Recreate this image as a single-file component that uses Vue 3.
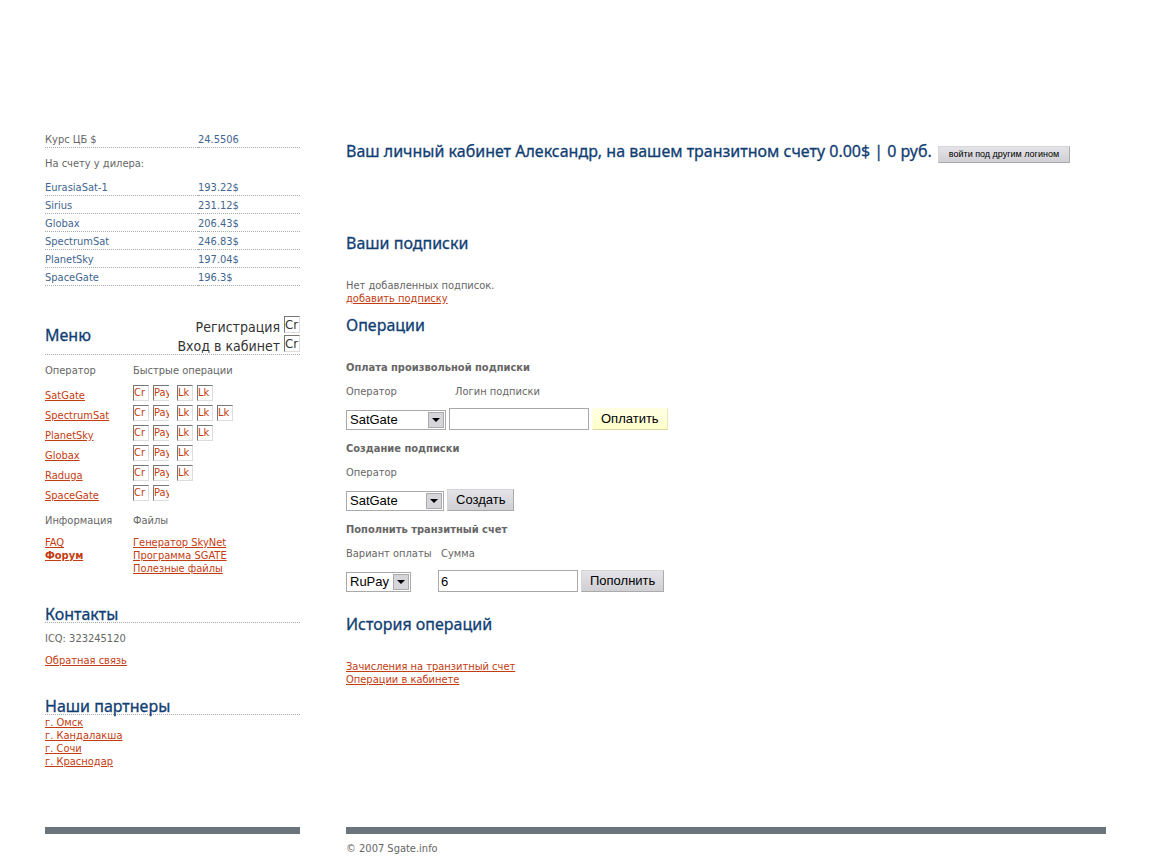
<script setup>
import { ref } from 'vue'

const balances = [
  ['EurasiaSat-1', '193.22$'],
  ['Sirius', '231.12$'],
  ['Globax', '206.43$'],
  ['SpectrumSat', '246.83$'],
  ['PlanetSky', '197.04$'],
  ['SpaceGate', '196.3$'],
]

const operators = [
  { name: 'SatGate', quick: ['Lk', 'Lk'] },
  { name: 'SpectrumSat', quick: ['Lk', 'Lk', 'Lk'] },
  { name: 'PlanetSky', quick: ['Lk', 'Lk'] },
  { name: 'Globax', quick: ['Lk'] },
  { name: 'Raduga', quick: ['Lk'] },
  { name: 'SpaceGate', quick: [] },
]

const partners = ['г. Омск', 'г. Кандалакша', 'г. Сочи', 'г. Краснодар']

const payOperator = ref('SatGate')
const createOperator = ref('SatGate')
const login = ref('')
const method = ref('RuPay')
const amount = ref('6')
</script>

<template>
  <div class="page">
    <div class="columns">
      <aside class="side">
        <table class="rates">
          <tbody>
            <tr class="rate">
              <td class="plain">Курс ЦБ $</td>
              <td>24.5506</td>
            </tr>
            <tr>
              <td class="caption" colspan="2">На счету у дилера:</td>
            </tr>
            <tr v-for="b in balances" :key="b[0]" class="rate">
              <td>{{ b[0] }}</td>
              <td>{{ b[1] }}</td>
            </tr>
          </tbody>
        </table>

        <section class="menu">
          <header class="menu-head">
            <h2>Меню</h2>
            <div class="account">
              <a href="#">Регистрация <span class="pic">Cr</span></a>
              <a href="#">Вход в кабинет <span class="pic">Cr</span></a>
            </div>
          </header>
          <div class="pair labels">
            <span>Оператор</span>
            <span>Быстрые операции</span>
          </div>
          <div v-for="o in operators" :key="o.name" class="pair operator">
            <div><a href="#">{{ o.name }}</a></div>
            <div class="quick">
              <a href="#" class="pic">Cr</a>
              <a href="#" class="pic pay">Pay</a>
              <a v-for="(q, i) in o.quick" :key="i" href="#" class="pic">{{ q }}</a>
            </div>
          </div>
          <div class="pair labels">
            <span>Информация</span>
            <span>Файлы</span>
          </div>
          <div class="pair">
            <div class="links">
              <a href="#">FAQ</a>
              <a href="#"><b>Форум</b></a>
            </div>
            <div class="links">
              <a href="#">Генератор SkyNet</a>
              <a href="#">Программа SGATE</a>
              <a href="#">Полезные файлы</a>
            </div>
          </div>
        </section>

        <section class="block">
          <h2 class="ruled">Контакты</h2>
          <p class="icq">ICQ: 323245120</p>
          <a href="#">Обратная связь</a>
        </section>

        <section class="block">
          <h2 class="ruled">Наши партнеры</h2>
          <div class="links">
            <a v-for="p in partners" :key="p" href="#">{{ p }}</a>
          </div>
        </section>
      </aside>

      <main class="main">
        <div class="welcome">
          <h1>Ваш личный кабинет Александр, на вашем транзитном счету 0.00$ | 0 руб.</h1>
          <button type="button" class="btn small">войти под другим логином</button>
        </div>

        <section class="subs">
          <h2>Ваши подписки</h2>
          <p>Нет добавленных подписок.</p>
          <a href="#">добавить подписку</a>
        </section>

        <section class="ops">
          <h2>Операции</h2>

          <form @submit.prevent>
            <h3>Оплата произвольной подписки</h3>
            <div class="fields pay-fields">
              <label for="pay-operator">Оператор</label>
              <label for="pay-login" class="indent">Логин подписки</label>
              <span class="row-end"></span>
              <span class="select">
                <select id="pay-operator" v-model="payOperator">
                  <option v-for="o in operators" :key="o.name">{{ o.name }}</option>
                </select>
                <span class="arrow"><svg width="8" height="4" viewBox="0 0 8 4"><path d="M0 0h8L4 4z" /></svg></span>
              </span>
              <input id="pay-login" v-model="login" type="text">
              <button type="submit" class="btn accent">Оплатить</button>
            </div>
          </form>

          <form @submit.prevent>
            <h3>Создание подписки</h3>
            <div class="fields create-fields">
              <label for="create-operator">Оператор</label>
              <span class="row-end"></span>
              <span class="select">
                <select id="create-operator" v-model="createOperator">
                  <option v-for="o in operators" :key="o.name">{{ o.name }}</option>
                </select>
                <span class="arrow"><svg width="8" height="4" viewBox="0 0 8 4"><path d="M0 0h8L4 4z" /></svg></span>
              </span>
              <button type="submit" class="btn">Создать</button>
            </div>
          </form>

          <form @submit.prevent>
            <h3>Пополнить транзитный счет</h3>
            <div class="fields fund-fields">
              <label for="fund-method">Вариант оплаты</label>
              <label for="fund-amount" class="indent">Сумма</label>
              <span class="row-end"></span>
              <span class="select short">
                <select id="fund-method" v-model="method">
                  <option>RuPay</option>
                </select>
                <span class="arrow"><svg width="8" height="4" viewBox="0 0 8 4"><path d="M0 0h8L4 4z" /></svg></span>
              </span>
              <input id="fund-amount" v-model="amount" type="text">
              <button type="submit" class="btn">Пополнить</button>
            </div>
          </form>
        </section>

        <section class="history">
          <h2>История операций</h2>
          <div class="links">
            <a href="#">Зачисления на транзитный счет</a>
            <a href="#">Операции в кабинете</a>
          </div>
        </section>
      </main>
    </div>

    <footer class="columns foot">
      <div class="bar"></div>
      <div class="bar"></div>
      <p class="copy">© 2007 Sgate.info</p>
    </footer>
  </div>
</template>

<style>
body {
  margin: 0;
  background: #fff;
}
</style>

<style scoped>
.page {
  padding: 130px 46px 0 45px;
  font: 11px/13px "DejaVu Sans Condensed", "DejaVu Sans", sans-serif;
  color: #666;
}
.columns {
  display: grid;
  grid-template-columns: 255px minmax(0, 1fr);
  column-gap: 46px;
}
h1, h2, h3, p {
  margin: 0;
}
h1, h2 {
  font-family: "Noto Sans", sans-serif;
  font-size: 16px;
  line-height: 20px;
  font-weight: 400;
  color: #113e73;
  -webkit-text-stroke: 0.3px #113e73;
}
h3 {
  height: 14px;
  font-size: 11px;
  line-height: 16px;
  font-weight: 700;
}
a {
  color: #c43c11;
}
.rates {
  width: 100%;
  border-collapse: collapse;
  color: #426690;
}
.rates td {
  padding: 2px 0 0;
  width: 40%;
}
.rates td:first-child {
  width: 60%;
}
.rate td {
  height: 15px;
  border-bottom: 1px dotted #aaa;
}
.rates .plain, .rates .caption {
  color: #666;
}
.rates .caption {
  padding: 0;
  height: 30px;
}
.menu {
  margin-top: 30px;
}
.menu-head {
  display: flex;
  justify-content: space-between;
  align-items: center;
  border-bottom: 1px dotted #aaa;
}
.account {
  display: flex;
  flex-direction: column;
  align-items: flex-end;
  font-size: 14px;
  line-height: 22px;
}
.account a {
  display: flex;
  gap: 4px;
  align-items: flex-start;
  height: 19px;
  color: #333;
  text-decoration: none;
}
.account a .pic {
  height: 17px;
  font-size: 13px;
  line-height: 16px;
}
.pic {
  box-sizing: border-box;
  width: 16px;
  height: 16px;
  overflow: hidden;
  border: 1px solid;
  border-color: #777 #ddd #ddd #777;
  line-height: 14px;
  text-decoration: none;
}
.pic.pay {
  margin-right: 4px;
  border-right: 0;
}
.pair {
  display: grid;
  grid-template-columns: 88px 1fr;
}
.labels {
  height: 30px;
  line-height: 32px;
}
.operator {
  height: 20px;
  line-height: 22px;
}
.quick {
  display: flex;
  gap: 4px;
}
.links {
  display: flex;
  flex-direction: column;
  align-items: flex-start;
}
.side .links {
  padding-top: 1px;
}
.block {
  margin-top: 27px;
}
.ruled {
  padding-top: 4px;
  line-height: 16px;
  border-bottom: 1px dotted #aaa;
}
.icq {
  padding-top: 1px;
  line-height: 30px;
}
.welcome {
  display: flex;
  align-items: flex-end;
  gap: 6px;
  padding-top: 11px;
}
.welcome h1 {
  padding-bottom: 2px;
}
.btn {
  height: 22px;
  padding: 0 8px;
  border: 1px solid;
  border-color: #d5d5da #aaa #aaa #d5d5da;
  background: linear-gradient(#e4e4e8, #cfcfd4);
  font: 13px/18px "Liberation Sans", Arial, sans-serif;
  color: #000;
  white-space: nowrap;
}
.btn.small {
  height: 17px;
  padding: 0 10px;
  font-size: 9px;
  line-height: 13px;
}
.btn.accent {
  border-color: #ffffe0 #e6e6b8 #d9d9a8 #ffffe0;
  background: linear-gradient(#ffffe6, #ffffc8);
}
.subs {
  margin-top: 70px;
}
.subs h2 {
  margin-bottom: 26px;
}
.ops > h2 {
  margin-bottom: 25px;
}
.history h2 {
  margin-bottom: 26px;
}
.ops {
  margin-top: 10px;
}
.fields {
  display: grid;
  column-gap: 3px;
  justify-content: start;
  align-items: end;
  margin-bottom: 11px;
}
.fields label {
  height: 34px;
  line-height: 36px;
}
.pay-fields {
  grid-template-columns: 100px 140px auto;
}
.create-fields {
  grid-template-columns: 98px auto;
}
.fund-fields {
  grid-template-columns: 89px 140px auto;
}
.indent {
  padding-left: 6px;
  white-space: nowrap;
}
.fund-fields .indent {
  padding-left: 3px;
}
.select {
  position: relative;
}
.select.short {
  width: 65px;
}
.select select {
  display: block;
  box-sizing: border-box;
  width: 100%;
  height: 20px;
  padding: 0 20px 0 3px;
  appearance: none;
  border: 1px solid #aaa;
  border-radius: 0;
  background: #fff;
  font: 13px/18px "Liberation Sans", Arial, sans-serif;
  color: #000;
}
.arrow {
  position: absolute;
  top: 2px;
  right: 2px;
  bottom: 2px;
  width: 14px;
  display: flex;
  align-items: center;
  justify-content: center;
  border: 1px solid #aaa;
  background: #d6d6da;
  pointer-events: none;
}
input {
  box-sizing: border-box;
  width: 100%;
  height: 22px;
  padding: 0 2px;
  border: 1px solid #aaa;
  border-radius: 0;
  font: 13px/18px "Liberation Sans", Arial, sans-serif;
  color: #000;
}
.history {
  margin-top: 22px;
}
.foot {
  margin-top: 59px;
}
.bar {
  height: 7px;
  background: #6b737b;
}
.copy {
  grid-column: 2;
  line-height: 30px;
}
</style>
